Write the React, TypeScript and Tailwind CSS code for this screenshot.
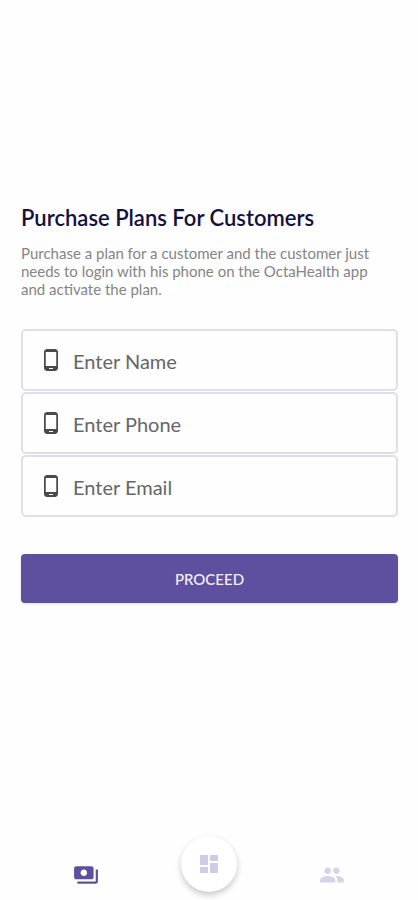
import { MdDashboard, MdGroup, MdPayments, MdPhoneAndroid } from "react-icons/md";

const fields = [
  { id: "name", type: "text", label: "Enter Name" },
  { id: "phone", type: "tel", label: "Enter Phone" },
  { id: "email", type: "email", label: "Enter Email" },
];

function Field({ id, type, label }: { id: string; type: string; label: string }) {
  return (
    <div className="flex h-[62px] items-center gap-[10px] rounded-[5px] border-2 border-[#dfdeec] px-4">
      <label htmlFor={id} aria-label={label} className="shrink-0 text-[#4a4a4a]">
        <MdPhoneAndroid size={24} />
      </label>
      <input
        id={id}
        name={id}
        type={type}
        placeholder={label}
        className="h-full min-w-0 flex-1 bg-transparent pt-[2px] text-[20px] text-[#555555] outline-none placeholder:text-[#666666]"
      />
    </div>
  );
}

export default function App() {
  return (
    <div className="flex min-h-screen flex-col bg-[#fefefe] font-[Lato,sans-serif]">
      <main className="flex flex-1 flex-col justify-center px-5 pl-[21px]">
        <h1 className="text-[22px] leading-7 font-semibold text-[#14103f]">
          Purchase Plans For Customers
        </h1>
        <p className="mt-3 pr-4 text-[15px] leading-[18px] text-[#858585]">
          Purchase a plan for a customer and the customer just needs to login with his phone on the
          OctaHealth app and activate the plan.
        </p>
        <form onSubmit={(event) => event.preventDefault()} className="mt-[31px] flex flex-col">
          <div className="flex flex-col gap-px">
            {fields.map((field) => (
              <Field key={field.id} {...field} />
            ))}
          </div>
          <button
            type="submit"
            className="mt-[37px] h-[49px] rounded-[4px] bg-[#5f509f] pt-[2px] text-[15px] font-medium text-[#f4f1fb] shadow-sm"
          >
            PROCEED
          </button>
        </form>
      </main>
      <nav className="grid h-[93px] grid-cols-3 items-end justify-items-center px-6">
        <button type="button" aria-label="Payments" className="mb-3 text-[#5f509f]">
          <MdPayments size={26} />
        </button>
        <button
          type="button"
          aria-label="Dashboard"
          className="mb-2 grid size-14 place-items-center rounded-full bg-white text-[#cfcce5] shadow-[0_3px_6px_rgba(0,0,0,0.22)]"
        >
          <MdDashboard size={24} />
        </button>
        <button type="button" aria-label="Customers" className="mb-3 text-[#d6d4ea]">
          <MdGroup size={26} />
        </button>
      </nav>
    </div>
  );
}
